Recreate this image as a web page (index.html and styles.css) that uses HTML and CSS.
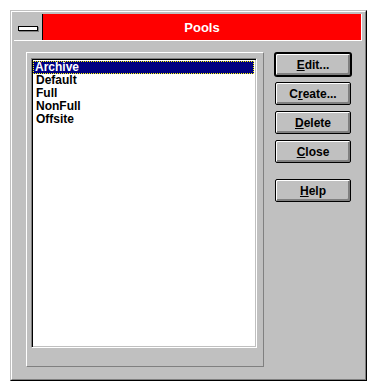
FILE: index.html
```html
<!DOCTYPE html>
<html lang="en">
<head>
<meta charset="UTF-8">
<title>Pools</title>
<link rel="stylesheet" href="styles.css">
</head>
<body>

<div class="window">
    <div class="frame">
        <div class="titlebar">
            <div class="sysbox"><span class="sysbar"></span></div>
            <div class="caption">Pools</div>
        </div>

        <div class="content">
            <div class="panel">
                <ul class="listbox">
                    <li class="selected">Archive</li>
                    <li>Default</li>
                    <li>Full</li>
                    <li>NonFull</li>
                    <li>Offsite</li>
                </ul>
            </div>

            <div class="buttons">
                <button class="btn default"><u>E</u>dit...</button>
                <button class="btn">C<u>r</u>eate...</button>
                <button class="btn"><u>D</u>elete</button>
                <button class="btn"><u>C</u>lose</button>
                <button class="btn help"><u>H</u>elp</button>
            </div>
        </div>
    </div>
</div>

</body>
</html>
```

FILE: styles.css
```css
* {
    box-sizing: border-box;
}
body {
    margin: 0;
    padding: 10px;
    background: #fff;
    font-family: "Liberation Sans", Arial, sans-serif;
    font-weight: bold;
    font-size: 12px;
}
.window {
    width: 357px;
    height: 371px;
    border: 1px solid;
    border-color: #c0c0c0 #000 #000 #c0c0c0;
    background: #c0c0c0;
}
.frame {
    height: 100%;
    border: 1px solid;
    border-color: #fff #808080 #808080 #fff;
    padding: 2px;
    display: flex;
    flex-direction: column;
}

/* title bar */
.titlebar {
    display: flex;
    height: 27px;
    margin-right: 1px;
    border-bottom: 1px solid #fff;
    border-right: 1px solid #fff;
}
.sysbox {
    width: 29px;
    border-right: 1px solid #000;
    padding: 12px 0 0 4px;
}
.sysbar {
    display: block;
    width: 20px;
    height: 5px;
    background: #fff;
    border: 1px solid #000;
    box-shadow: 1px 1px 0 #808080;
}
.caption {
    flex: 1;
    background: #f00;
    color: #fff;
    font-size: 13px;
    text-align: center;
    line-height: 27px;
}

/* body */
.content {
    flex: 1;
    display: flex;
    gap: 10px;
    padding: 11px 10px 12px 12px;
}
.panel {
    width: 238px;
    height: 315px;
    border: 1px solid;
    border-color: #fff #808080 #808080 #fff;
    padding: 5px 0 0 4px;
}
.listbox {
    list-style: none;
    margin: 0;
    padding: 2px 2px 0 1px;
    width: 226px;
    height: 290px;
    background: #fff;
    border: 1px solid;
    border-color: #808080 #fff #fff #808080;
    box-shadow: inset 1px 1px 0 #000, inset -1px -1px 0 #c0c0c0;
}
.listbox li {
    height: 13px;
    line-height: 13px;
    padding-left: 2px;
    border: 1px solid transparent;
    border-width: 0 1px;
    color: #000;
}
.listbox li.selected {
    background: #000080;
    color: #fff;
    border: 1px dotted #ff0;
    line-height: 11px;
    padding-left: 1px;
}

/* push buttons */
.buttons {
    display: flex;
    flex-direction: column;
    gap: 6px;
    padding-top: 1px;
    padding-left: 1px;
}
.btn {
    width: 76px;
    height: 23px;
    padding: 0;
    font-family: inherit;
    font-weight: bold;
    font-size: 12px;
    color: #000;
    background: #c0c0c0;
    border: 1px solid #000;
    border-radius: 2px;
    box-shadow: inset 1px 1px 0 #fff, inset -2px -2px 0 #808080;
}
.btn.default {
    box-shadow: 0 0 0 1px #000, inset 1px 1px 0 #fff, inset -2px -2px 0 #808080;
}
.btn.help {
    margin-top: 10px;
}
```
